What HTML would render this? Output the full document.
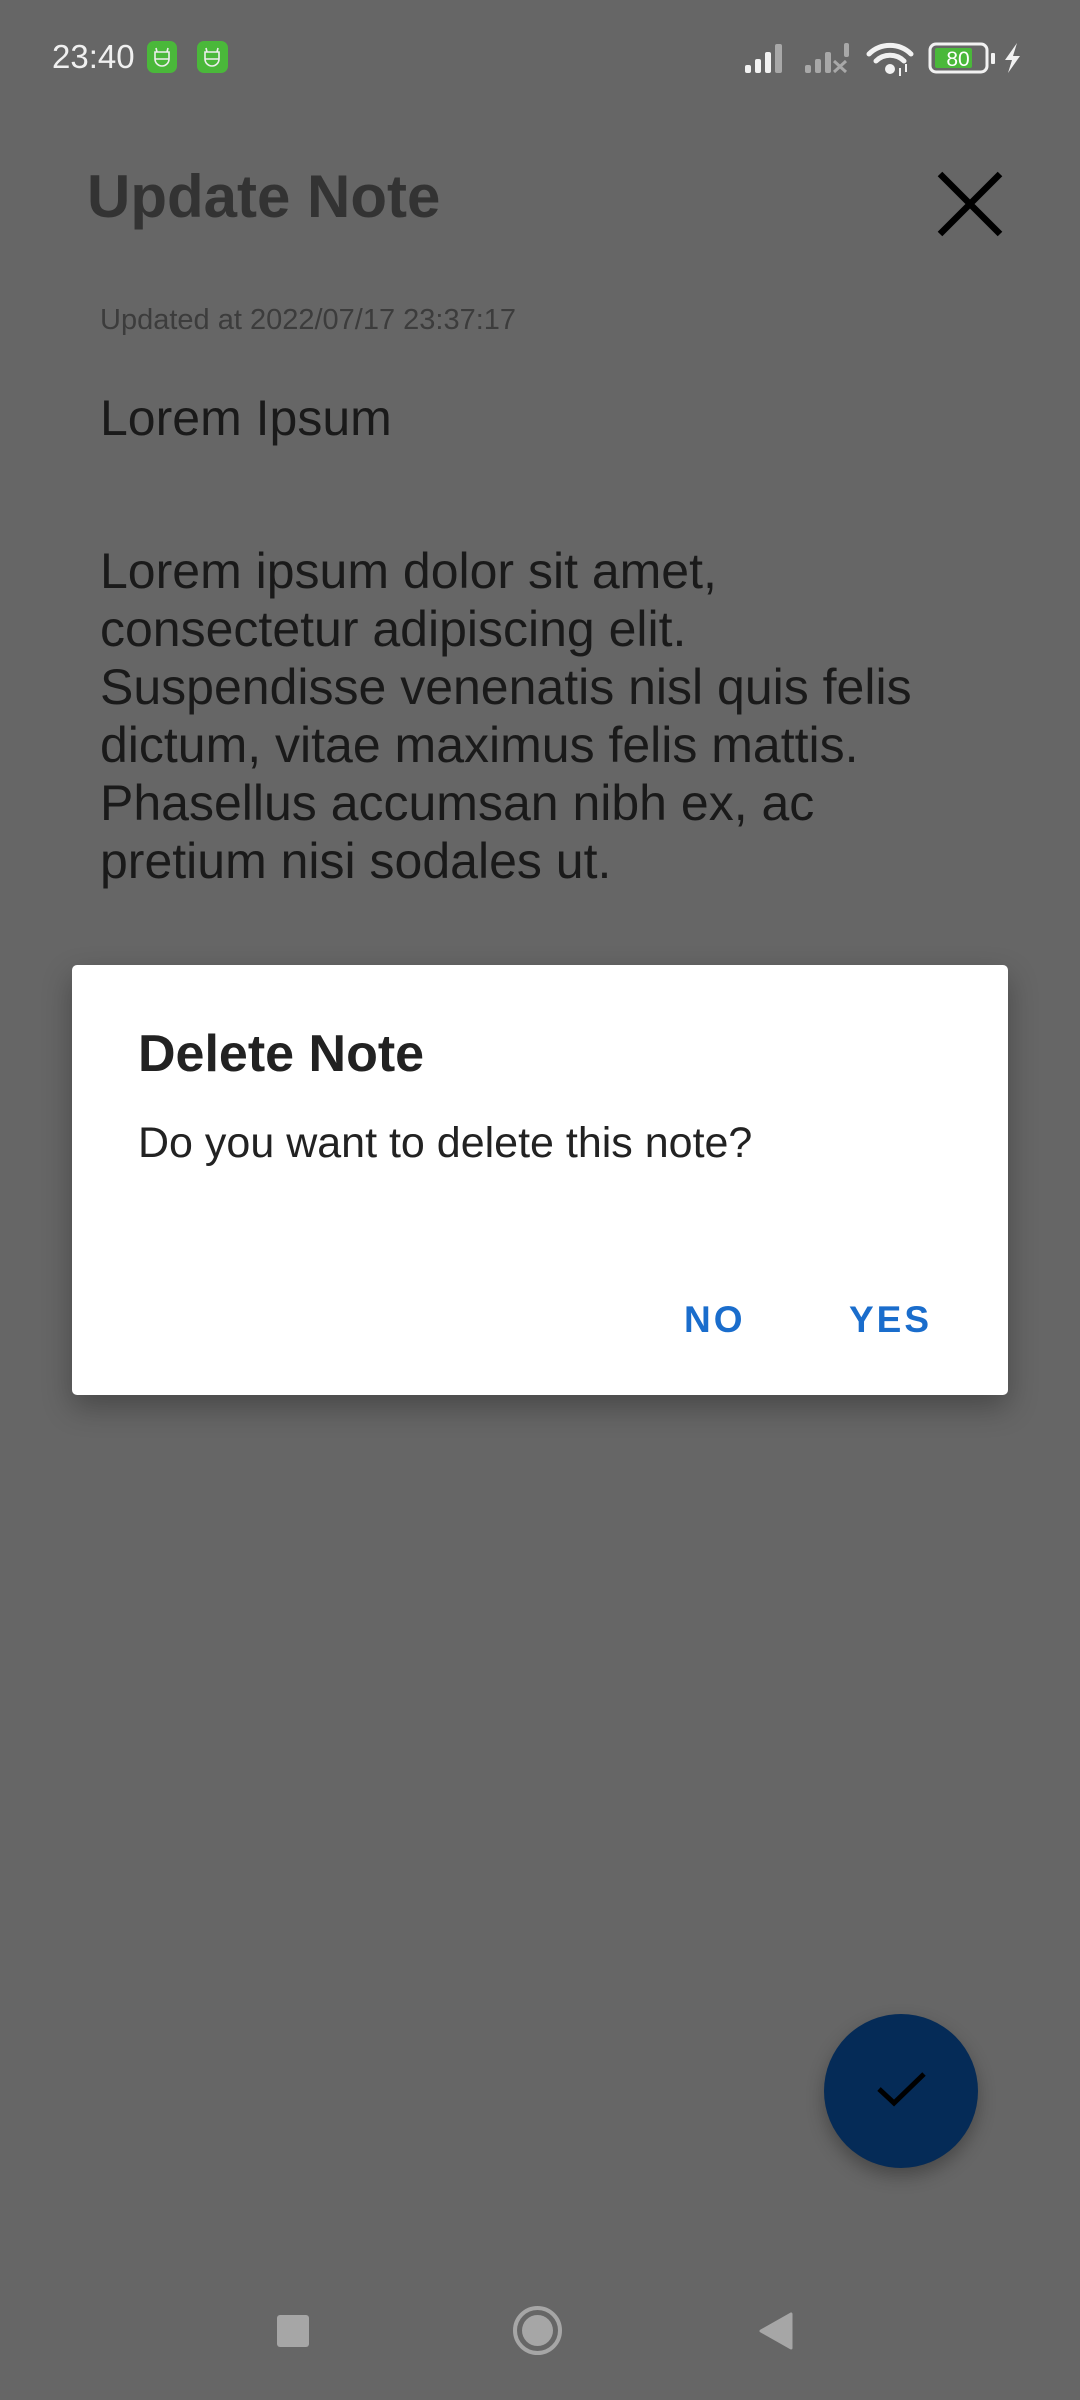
<!DOCTYPE html>
<html><head><meta charset="utf-8"><style>
*{margin:0;padding:0;box-sizing:border-box}
body{width:1080px;height:2400px;background:#666666;position:relative;overflow:hidden;font-family:"Liberation Sans",Roboto,sans-serif}
.a{position:absolute;white-space:nowrap}
</style></head><body>
<div class="a" style="left:52px;top:36px;font-size:33px;color:#f0f0f0;line-height:42px">23:40</div>
<div class="a" style="left:147px;top:41px;width:30px;height:32px;background:#4ab83a;border-radius:7px"></div>
<div class="a" style="left:197px;top:41px;width:31px;height:32px;background:#4ab83a;border-radius:7px"></div>
<svg class="a" style="left:147px;top:41px" width="82" height="32" viewBox="0 0 82 32"><g fill="none" stroke="#eee" stroke-width="1.6"><path d="M8 11h14v7a7 7 0 0 1-14 0z M8 18h14 M10 11l-1-4 M20 11l1-4"/><path d="M58 11h14v7a7 7 0 0 1-14 0z M58 18h14 M60 11l-1-4 M70 11l1-4"/></g></svg>
<svg class="a" style="left:745px;top:40px" width="280" height="36" viewBox="0 0 280 36">
<g fill="#f2f2f2"><rect x="0" y="25" width="6" height="8" rx="2"/><rect x="10" y="19" width="6" height="14" rx="2"/><rect x="20" y="12" width="6" height="21" rx="2"/></g>
<g fill="#a8a8a8"><rect x="30" y="4" width="7" height="29" rx="2"/><rect x="60" y="25" width="6" height="8" rx="2"/><rect x="70" y="19" width="6" height="14" rx="2"/><rect x="80" y="12" width="6" height="21" rx="2"/><rect x="99" y="3" width="5" height="14" rx="2"/></g>
<path d="M89 21l12 11M101 21l-12 11" stroke="#a8a8a8" stroke-width="3"/>
<g fill="none" stroke="#f2f2f2" stroke-width="5" stroke-linecap="round"><path d="M124 14a30 30 0 0 1 42 0"/><path d="M131 21a20 20 0 0 1 28 0"/></g>
<circle cx="145" cy="29" r="5" fill="#f2f2f2"/><path d="M155 28v8M161 24v8" stroke="#f2f2f2" stroke-width="2"/>
<rect x="185" y="4" width="57" height="28" rx="6" fill="none" stroke="#f2f2f2" stroke-width="3"/>
<rect x="190" y="8" width="37" height="20" rx="2" fill="#4ab83a"/>
<text x="213" y="26" fill="#fff" font-size="21" text-anchor="middle" font-family="Liberation Sans">80</text>
<rect x="246" y="13" width="4" height="11" rx="1" fill="#f2f2f2"/>
<path d="M272 3l-12 17h7l-4 13 12-17h-7z" fill="#f2f2f2"/>
</svg>

<div class="a" style="left:87px;top:162px;font-size:60px;font-weight:bold;color:#333;line-height:70px">Update Note</div>
<svg class="a" style="left:936px;top:170px" width="68" height="68" viewBox="0 0 68 68"><path d="M4 4l60 60M64 4L4 64" stroke="#000" stroke-width="6.5"/></svg>
<div class="a" style="left:100px;top:303px;font-size:29px;color:#3c3c3c;line-height:34px">Updated at 2022/07/17 23:37:17</div>
<div class="a" style="left:100px;top:389px;font-size:50px;color:#1a1a1a;line-height:58px">Lorem Ipsum</div>
<div class="a" style="left:100px;top:542px;font-size:50px;color:#1a1a1a;line-height:58px">Lorem ipsum dolor sit amet,<br>consectetur adipiscing elit.<br>Suspendisse venenatis nisl quis felis<br>dictum, vitae maximus felis mattis.<br>Phasellus accumsan nibh ex, ac<br>pretium nisi sodales ut.</div>

<div class="a" style="left:72px;top:965px;width:936px;height:430px;background:#fff;border-radius:5px;box-shadow:0 12px 30px rgba(0,0,0,.3)"></div>
<div class="a" style="left:138px;top:1023px;font-size:52px;font-weight:bold;color:#222;line-height:62px">Delete Note</div>
<div class="a" style="left:138px;top:1117px;font-size:43px;color:#222;line-height:52px">Do you want to delete this note?</div>
<div class="a" style="left:684px;top:1298px;font-size:37px;font-weight:bold;color:#1a6dcc;letter-spacing:3px;line-height:44px">NO</div>
<div class="a" style="left:849px;top:1298px;font-size:37px;font-weight:bold;color:#1a6dcc;letter-spacing:3px;line-height:44px">YES</div>

<div class="a" style="left:824px;top:2014px;width:154px;height:154px;border-radius:50%;background:#052b57;box-shadow:0 8px 18px rgba(0,0,0,.3)"></div>
<svg class="a" style="left:876px;top:2070px" width="50" height="40" viewBox="0 0 50 40"><path d="M3 19l15 14L48 4" fill="none" stroke="#000" stroke-width="5"/></svg>

<div class="a" style="left:277px;top:2315px;width:32px;height:32px;background:#a6a6a6;border-radius:3px"></div>
<div class="a" style="left:513px;top:2306px;width:49px;height:49px;border-radius:50%;border:4px solid #a6a6a6"></div>
<div class="a" style="left:522px;top:2315px;width:31px;height:31px;border-radius:50%;background:#a6a6a6"></div>
<svg class="a" style="left:758px;top:2312px" width="36" height="38" viewBox="0 0 36 38"><path d="M33 2v34L3 19z" fill="#a6a6a6" stroke="#a6a6a6" stroke-width="3" stroke-linejoin="round"/></svg>
</body></html>
